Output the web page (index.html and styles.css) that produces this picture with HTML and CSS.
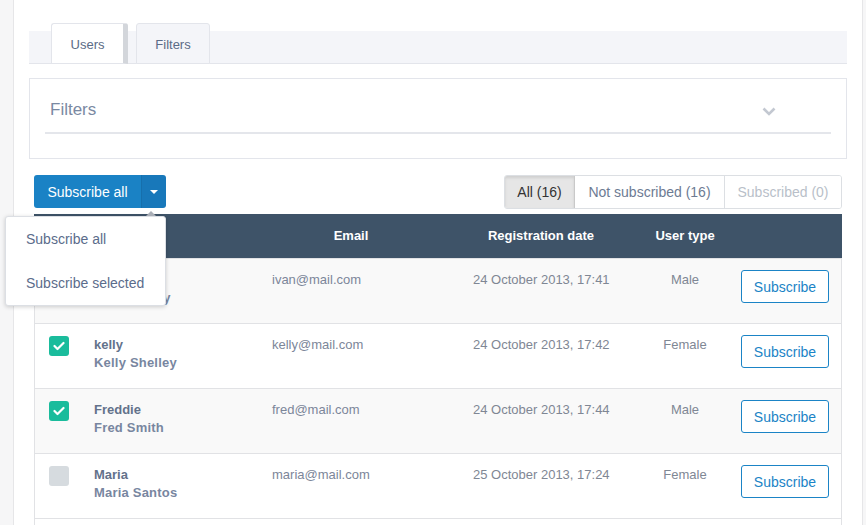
FILE: index.html
```html
<!DOCTYPE html>
<html>
<head>
<meta charset="utf-8">
<link rel="stylesheet" href="styles.css">
</head>
<body>
<div class="page">
  <div class="tabbar">
    <div class="tab tab-active">Users</div>
    <div class="tab">Filters</div>
  </div>

  <div class="filters-panel">
    <div class="filters-head">
      <span class="filters-title">Filters</span>
      <svg class="chev" width="14" height="9" viewBox="0 0 14 9"><polyline points="1.5,1.5 7,7 12.5,1.5" fill="none" stroke="#c3c8d1" stroke-width="2.6"/></svg>
    </div>
  </div>

  <div class="toolbar">
    <div class="split">
      <button class="split-main">Subscribe all</button>
      <button class="split-caret"><span class="caret"></span></button>
      <div class="menu">
        <span class="menu-arrow"></span>
        <div class="menu-item">Subscribe all</div>
        <div class="menu-item">Subscribe selected</div>
      </div>
    </div>
    <div class="seg">
      <div class="seg-btn seg-active">All (16)</div>
      <div class="seg-btn">Not subscribed (16)</div>
      <div class="seg-btn seg-muted">Subscribed (0)</div>
    </div>
  </div>

  <div class="table">
    <div class="thead">
      <div></div>
      <div></div>
      <div class="th">Email</div>
      <div class="th">Registration date</div>
      <div class="th">User type</div>
      <div></div>
    </div>

    <div class="row alt">
      <div class="c-check"><span class="cb"></span></div>
      <div class="c-name"><div class="uname">ivan</div><div class="fname">Ivan Gorsky</div></div>
      <div class="c-email">ivan@mail.com</div>
      <div class="c-date">24 October 2013, 17:41</div>
      <div class="c-type">Male</div>
      <div class="c-btn"><button class="sub-btn">Subscribe</button></div>
    </div>

    <div class="row">
      <div class="c-check"><span class="cb cb-on"><svg width="12" height="10" viewBox="0 0 12 10"><polyline points="1.5,5 4.5,8 10.5,2" fill="none" stroke="#fff" stroke-width="2.2" stroke-linecap="round" stroke-linejoin="round"/></svg></span></div>
      <div class="c-name"><div class="uname">kelly</div><div class="fname">Kelly Shelley</div></div>
      <div class="c-email">kelly@mail.com</div>
      <div class="c-date">24 October 2013, 17:42</div>
      <div class="c-type">Female</div>
      <div class="c-btn"><button class="sub-btn">Subscribe</button></div>
    </div>

    <div class="row alt">
      <div class="c-check"><span class="cb cb-on"><svg width="12" height="10" viewBox="0 0 12 10"><polyline points="1.5,5 4.5,8 10.5,2" fill="none" stroke="#fff" stroke-width="2.2" stroke-linecap="round" stroke-linejoin="round"/></svg></span></div>
      <div class="c-name"><div class="uname">Freddie</div><div class="fname">Fred Smith</div></div>
      <div class="c-email">fred@mail.com</div>
      <div class="c-date">24 October 2013, 17:44</div>
      <div class="c-type">Male</div>
      <div class="c-btn"><button class="sub-btn">Subscribe</button></div>
    </div>

    <div class="row">
      <div class="c-check"><span class="cb"></span></div>
      <div class="c-name"><div class="uname">Maria</div><div class="fname">Maria Santos</div></div>
      <div class="c-email">maria@mail.com</div>
      <div class="c-date">25 October 2013, 17:24</div>
      <div class="c-type">Female</div>
      <div class="c-btn"><button class="sub-btn">Subscribe</button></div>
    </div>

    <div class="row row-last"></div>
  </div>
</div>
</body>
</html>
```

FILE: styles.css
```css
* { box-sizing: border-box; }
html, body { margin: 0; padding: 0; }
body {
  background: #f6f6f7;
  font-family: "Liberation Sans", Arial, sans-serif;
  font-size: 13px;
  overflow: hidden;
  height: 525px;
}
.page {
  margin-left: 13px;
  width: 850px;
  height: 525px;
  background: #fff;
  border-left: 1px solid #e6e6e8;
  border-right: 1px solid #e6e6e8;
  padding: 31px 15px 0 15px;
}

/* tabs */
.tabbar {
  height: 33px;
  background: #f4f5f9;
  border-bottom: 1px solid #e3e5eb;
  display: flex;
  align-items: flex-end;
  padding-left: 22px;
  gap: 8px;
}
.tab {
  height: 41px;
  margin-bottom: -1px;
  line-height: 41px;
  color: #5b6b86;
  font-size: 13px;
  background: #f4f5f9;
  border: 1px solid #e3e5eb;
  border-radius: 3px 3px 0 0;
  text-align: center;
  width: 74px;
}
.tab-active {
  width: 77px;
  background: #fff;
  border-right: 5px solid #d3d6db;
}

/* filters panel */
.filters-panel {
  margin-top: 14px;
  height: 81px;
  border: 1px solid #e3e5eb;
  padding: 0 15px;
}
.filters-head {
  display: flex;
  align-items: center;
  justify-content: space-between;
  padding: 19px 55px 10px 5px;
  border-bottom: 2px solid #e4e6eb;
}
.filters-title {
  font-size: 17px;
  line-height: 24px;
  color: #7a89a2;
}
.chev { display: block; margin-top: 3px; }

/* toolbar */
.toolbar {
  margin: 16px 5px 0 5px;
  height: 33px;
  display: flex;
  justify-content: space-between;
}
.split {
  position: relative;
  display: flex;
  height: 33px;
}
.split button {
  font-family: "Liberation Sans", Arial, sans-serif;
  font-size: 14px;
  color: #fff;
  border: none;
  margin: 0;
  height: 33px;
  cursor: pointer;
}
.split-main {
  width: 107px;
  background: #1a82c5;
  border-radius: 3px 0 0 3px;
  padding: 0;
}
.split-caret {
  width: 25px;
  background: #1878ba;
  border-left: 1px solid #166fac !important;
  border-radius: 0 3px 3px 0;
  display: flex;
  align-items: center;
  justify-content: center;
  padding: 0;
}
.caret {
  width: 0; height: 0;
  border-left: 4px solid transparent;
  border-right: 4px solid transparent;
  border-top: 4px solid #fff;
}
.menu {
  position: absolute;
  left: -29px;
  top: 41px;
  width: 161px;
  background: #fff;
  border: 1px solid #dcdfe4;
  border-radius: 3px;
  box-shadow: 0 1px 4px rgba(0,0,0,0.18);
  z-index: 10;
}
.menu-arrow {
  position: absolute;
  top: -6px;
  left: 140px;
  width: 0; height: 0;
  border-left: 5px solid transparent;
  border-right: 5px solid transparent;
  border-bottom: 5px solid #a9aeb6;
}
.menu-item {
  height: 44px;
  line-height: 44px;
  padding-left: 20px;
  font-size: 14px;
  color: #5b6c8b;
  white-space: nowrap;
}

.seg {
  display: flex;
  height: 34px;
  border: 1px solid #dcdfe3;
  border-radius: 3px;
  overflow: hidden;
}
.seg-btn {
  font-size: 14px;
  line-height: 32px;
  color: #6d7b93;
  background: #fff;
  border-left: 1px solid #dcdfe3;
  white-space: nowrap;
  text-align: center;
}
.seg-btn:first-child { border-left: none; }
.seg-active {
  width: 70px;
  background: #e6e6e6;
  color: #333;
  box-shadow: inset 0 2px 3px rgba(0,0,0,0.1);
  border-right: 1px solid #c9c9c9;
}
.seg-active + .seg-btn { border-left: none; width: 149px; }
.seg-muted { color: #b9bfc9; width: 117px; }

/* table */
.table {
  margin: 6px 5px 0 5px;
  border-left: 1px solid #e1e2e5;
  border-right: 1px solid #e1e2e5;
}
.thead {
  display: grid;
  grid-template-columns: 59px 178px 158px 222px 66px 1fr;
  height: 44px;
  background: #3e5368;
  margin: 0 -1px;
  padding-left: 1px;
}
.th {
  color: #fff;
  font-weight: bold;
  font-size: 13px;
  line-height: 43px;
  text-align: center;
  white-space: nowrap;
}
.row {
  display: grid;
  grid-template-columns: 59px 178px 201px 180px 64px 1fr;
  height: 65px;
  border-top: 1px solid #e1e2e5;
  background: #fff;
}
.row.alt { background: #f9f9f9; }
.row > div { padding-top: 12px; line-height: 18px; white-space: nowrap; }
.c-check { padding-left: 14px; }
.cb {
  display: flex;
  align-items: center;
  justify-content: center;
  width: 20px;
  height: 20px;
  border-radius: 3px;
  background: #d6dbdf;
}
.cb-on { background: #1abc9c; }
.uname { font-weight: bold; color: #63728b; }
.fname { font-weight: bold; color: #7886a0; letter-spacing: 0.2px; }
.c-email { color: #7c8699; }
.c-date { color: #7f8794; }
.c-type { color: #7f8794; text-align: center; }
.row > .c-btn { padding-top: 11px; display: flex; justify-content: flex-end; padding-right: 12px; }
.sub-btn {
  width: 88px;
  height: 33px;
  background: #fff;
  border: 1px solid #1b84c6;
  border-radius: 3px;
  color: #1b84c6;
  font-family: "Liberation Sans", Arial, sans-serif;
  font-size: 14px;
  padding: 0;
  margin: 0;
}
```
